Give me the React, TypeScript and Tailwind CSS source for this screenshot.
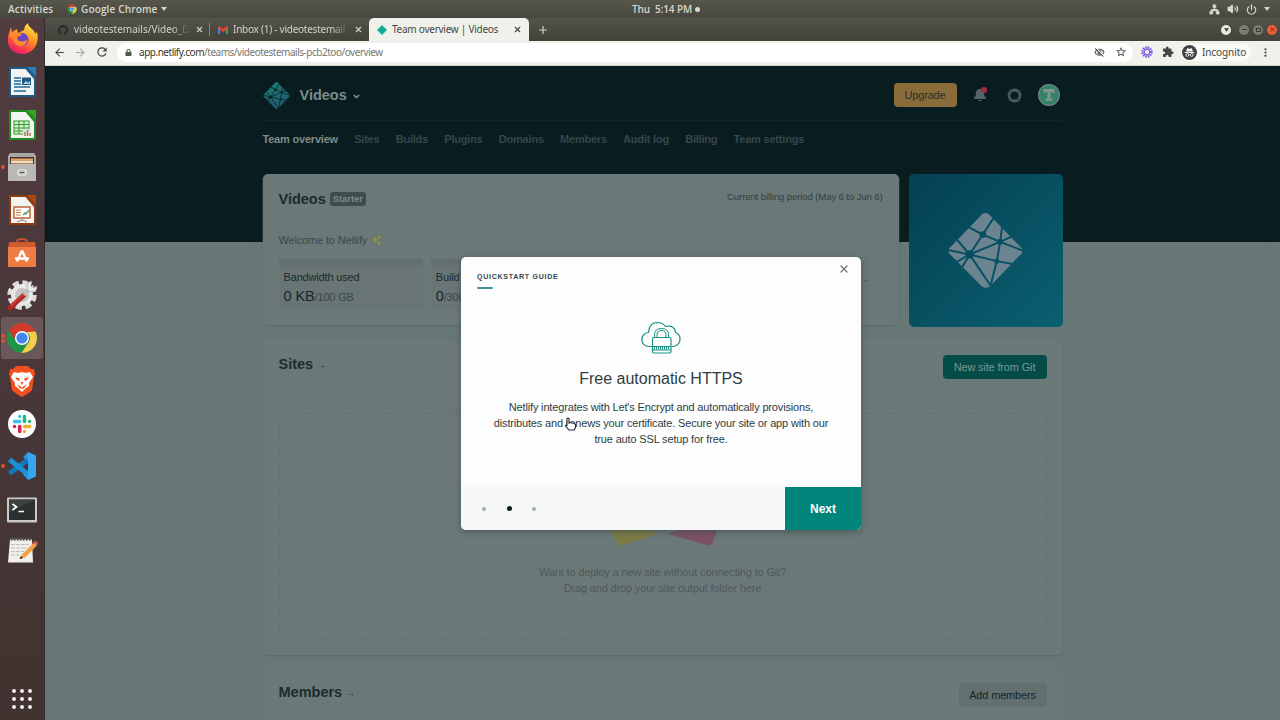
import type { ReactNode } from 'react'
import { FaGithub, FaLock } from 'react-icons/fa'
import { MdArrowBack, MdArrowForward, MdExtension, MdMoreVert, MdOutlineVisibilityOff, MdRefresh, MdStarBorder } from 'react-icons/md'
import { Volume2, Power, Network, X, Plus, ChevronDown } from 'lucide-react'

function ChromeIcon({ size }: { size: number }) {
  return (
    <svg width={size} height={size} viewBox="0 0 32 32">
      <circle cx="16" cy="16" r="15" fill="#1f9348" />
      <path d="M3 8.5A15 15 0 0 1 29 8.5L29.5 10H16a6.5 6.5 0 0 0-5.8 9z" fill="#d23a2c" />
      <path d="M29.5 9.5A15 15 0 0 1 15.5 31l6.2-9.5A7 7 0 0 0 20 10z" fill="#f5cb50" />
      <circle cx="16" cy="16" r="7" fill="#fff" />
      <circle cx="16" cy="16" r="5.6" fill="#4285f0" />
    </svg>
  )
}

function NetlifyMark({ id, size, from, to }: { id: string; size: number; from: string; to: string }) {
  return (
    <svg width={size} height={size} viewBox="0 0 226 226">
      <defs>
        <linearGradient id={`${id}-fill`} x1="0" y1="0" x2="0.3" y2="1">
          <stop offset="0" stopColor={from} />
          <stop offset="1" stopColor={to} />
        </linearGradient>
        <mask id={`${id}-mask`}>
          <rect width="226" height="226" fill="#fff" />
          <g stroke="#000" strokeWidth="6" fill="none">
            <path d="M65 125L-2 111M65 125L20 72M65 125L105 65M65 125L157 87M65 125L147 145M65 125L132 224M65 125L24 149M65 125L40 168" />
            <path d="M105 65L58 40M105 65L142 8M105 65L157 87M157 87L164 35M157 87L198 68M157 87L230 115M157 87L147 145M147 145L202 155M147 145L128 220" />
          </g>
          <circle cx="65" cy="125" r="13" />
          <circle cx="105" cy="65" r="10" />
          <circle cx="157" cy="87" r="9" />
          <circle cx="147" cy="145" r="8" />
        </mask>
      </defs>
      <path
        d="M103 4q10-8 20 0L222 106q7 8 0 16L125 222q-11 7-22 0L4 122q-6-8 0-16z"
        fill={`url(#${id}-fill)`}
        mask={`url(#${id}-mask)`}
      />
    </svg>
  )
}

function DocIcon({ color, fold, children }: { color: string; fold: string; children: ReactNode }) {
  return (
    <svg width="32" height="34" viewBox="0 0 32 34">
      <path d="M3 2h18l9 10v20H3z" fill={color} />
      <path d="M5 4h14.5L28 14v16H5z" fill="#f3f3f2" />
      <path d="M19 2h11v12z" fill={color} />
      <path d="M21 2h9v9z" fill={fold} />
      {children}
    </svg>
  )
}

function FirefoxIcon() {
  return (
    <svg width="32" height="34" viewBox="0 0 32 34">
      <defs>
        <linearGradient id="ff" x1="0.8" y1="0" x2="0.3" y2="1">
          <stop offset="0" stopColor="#fff04a" />
          <stop offset="0.45" stopColor="#ff9425" />
          <stop offset="0.8" stopColor="#fb3b4c" />
          <stop offset="1" stopColor="#e01d78" />
        </linearGradient>
      </defs>
      <path d="M5 5l1 5 5-3 1 4 6-3 1-4 3-3c0 5 7 6 7 11l2-2c3 12-4 22-15 22C5 32-1 22 3 11z" fill="url(#ff)" />
      <circle cx="16" cy="17.500" r="6.500" fill="#6b45c8" />
      <path d="M3 13c5-5 9-2 13-1-1 3-5 2-5 4 1 5 9 4 10 1 0 7-6 8-10 6C7 21 7 15 3 13z" fill="#ff8b28" />
    </svg>
  )
}

function WriterIcon() {
  return (
    <DocIcon color="#1c5a87" fold="#2a7fb5">
      <path d="M8 13h7M8 16h7M8 19h7M8 22h16M8 26h12" stroke="#1c6a9c" strokeWidth="1.500" />
      <rect x="16" y="12.500" width="9" height="7.500" fill="#23577b" />
      <path d="M17 19l3-3 2 2 2-2v3z" fill="#a8d3e8" />
    </DocIcon>
  )
}

function CalcIcon() {
  return (
    <DocIcon color="#238a20" fold="#37a51f">
      <rect x="8" y="13" width="15" height="13" fill="#d9efd5" stroke="#2f9a2a" />
      <path d="M8 16.500h15M8 20h15M8 23h15M13 13v13M18 13v13" stroke="#2f9a2a" />
      <rect x="17" y="21" width="8" height="7" fill="#dfe6e2" />
      <path d="M19 28v-4M21.500 28v-6M24 28v-3" stroke="#b6653c" strokeWidth="1.300" />
    </DocIcon>
  )
}

function FilesIcon() {
  return (
    <svg width="32" height="34" viewBox="0 0 32 34">
      <path d="M4 3h24l2 3v24H2V6z" fill="#a9a7a3" />
      <rect x="4" y="7" width="24" height="8" fill="#4a3428" />
      <rect x="5" y="8.500" width="22" height="2" fill="#e9a66a" />
      <rect x="5" y="10.500" width="22" height="3" fill="#f7dcb6" />
      <rect x="2" y="14" width="28" height="17" rx="1" fill="#b9b8b5" />
      <rect x="12" y="20" width="8" height="5" rx="1" fill="none" stroke="#f0f0ee" strokeWidth="1.200" />
      <path d="M14 22.500h4" stroke="#555" />
    </svg>
  )
}

function ImpressIcon() {
  return (
    <DocIcon color="#8f3b10" fold="#a9480f">
      <rect x="8" y="14" width="16" height="11" fill="#fff" stroke="#b65a28" strokeWidth="1.400" />
      <path d="M10 17h5M10 19.500h5M10 22h5" stroke="#d07b46" />
      <path d="M17 22l2-2 1 1 3-4" stroke="#4f9b5c" fill="none" strokeWidth="1.300" />
      <path d="M16 25v2l-5 2M16 27l5 2" stroke="#888" fill="none" />
    </DocIcon>
  )
}

function SoftwareIcon() {
  return (
    <svg width="32" height="34" viewBox="0 0 32 34">
      <path d="M11 9V6q0-3 5-3t5 3v3" fill="none" stroke="#c5552b" strokeWidth="1.800" />
      <path d="M3 6h26l1 7H2z" fill="#cf5a2d" />
      <path d="M2 11h28v20H2z" fill="#ef7c42" />
      <path d="M11 25.500l4.500-10h1l4.500 10M9 22.500h14" fill="none" stroke="#fff" strokeWidth="2.300" />
    </svg>
  )
}

function SettingsIcon() {
  return (
    <svg width="32" height="34" viewBox="0 0 32 34">
      <circle cx="16" cy="17" r="12.500" fill="none" stroke="#dcdcda" strokeWidth="4.500" strokeDasharray="6.200 3.620" />
      <circle cx="16" cy="17" r="9" fill="#c3c5c4" stroke="#e8e8e7" strokeWidth="4" />
      <path d="M4 30L18 17" stroke="#b52722" strokeWidth="5" strokeLinecap="round" />
      <path d="M5 28L18 15.500" stroke="#e06055" strokeWidth="1" />
      <path d="M18 17l6-7" stroke="#b9bfc0" strokeWidth="4" />
      <path d="M21 9q0-5 5-6l-1 5 2 2 4-2q0 6-5 6t-5-5z" fill="#e9edee" stroke="#8a8f90" strokeWidth="0.600" />
    </svg>
  )
}

function BraveIcon() {
  return (
    <svg width="32" height="34" viewBox="0 0 32 34">
      <path d="M10 2h12l3 3 3 0 1 5-1 3-2 13q-1 2-10 7-9-5-10-7L4 13 3 10l1-5 3 0z" fill="#f4501e" />
      <path d="M8 8l4 1 4-1 4 1 4-1 3 5-4 6 0 3-3 2-4 4-4-4-3-2 0-3-4-6z" fill="#fff" />
      <path d="M9 13l5 1.500-1 2.500-2-1zM23 13l-5 1.500 1 2.500 2-1zM14.500 18h3l-1.500 3zM11 20l5 3.500 5-3.500-3 4.500h-4z" fill="#f4501e" />
    </svg>
  )
}

function SlackIcon() {
  return (
    <svg width="32" height="34" viewBox="0 0 32 34">
      <circle cx="16" cy="17" r="14" fill="#fff" />
      <g strokeWidth="3.600" strokeLinecap="round">
        <path d="M13.700 9.500v0M8.500 14.500h5.200" stroke="#36c5f0" />
        <path d="M18.500 9.500v5M23.600 14.500h0" stroke="#2eb67d" />
        <path d="M18.500 19.500h5.200M18.500 24.500v0" stroke="#ecb22e" />
        <path d="M13.700 19.500v5M8.500 19.500h0" stroke="#e01e5a" />
      </g>
    </svg>
  )
}

function VsCodeIcon() {
  return (
    <svg width="32" height="34" viewBox="0 0 32 34">
      <path d="M23 10L3.500 24.500" stroke="#1177bb" strokeWidth="5" />
      <path d="M3.500 10.500L24 27" stroke="#1c8fd6" strokeWidth="5" />
      <path d="M22 3l8 3.500v21L22 31z" fill="#36a6ee" />
      <path d="M22 3v8l-5-2.500zM22 31v-8l-5 2.500z" fill="#249ae4" />
    </svg>
  )
}

function TerminalIcon() {
  return (
    <svg width="32" height="34" viewBox="0 0 32 34">
      <rect x="1" y="5.500" width="30" height="25" rx="1" fill="#c9c9c7" />
      <rect x="3" y="7.500" width="26" height="20.500" fill="#2c2f2f" />
      <path d="M3 7.500h26L3 20.500z" fill="#3d4040" />
      <path d="M6.500 12l4 3-4 3M12.500 19.500h5.500" fill="none" stroke="#fff" strokeWidth="1.700" />
    </svg>
  )
}

function NotesIcon() {
  return (
    <svg width="32" height="34" viewBox="0 0 32 34">
      <path d="M4 4.500h22l1 23H2z" fill="#f0efea" />
      <path d="M5 4h21" stroke="#55544f" strokeWidth="3.500" strokeDasharray="1.500 1.500" />
      <path d="M5 9.500h18M5 13h16M5 16.500h13M5 20h10" stroke="#bdbdb8" strokeDasharray="4 1" />
      <path d="M16 19.500L28 7.500l3 3-12 12-5 1.500z" fill="#f0a044" />
      <path d="M27.500 7.500l2-2 3 3-2 2z" fill="#d9505b" />
      <path d="M13.500 24l1.500-3 2 2z" fill="#222" />
    </svg>
  )
}

const dockItems = [
  { name: 'firefox', icon: <FirefoxIcon />, dots: 0 },
  { name: 'writer', icon: <WriterIcon />, dots: 0 },
  { name: 'calc', icon: <CalcIcon />, dots: 0 },
  { name: 'files', icon: <FilesIcon />, dots: 1 },
  { name: 'impress', icon: <ImpressIcon />, dots: 0 },
  { name: 'software', icon: <SoftwareIcon />, dots: 0 },
  { name: 'settings', icon: <SettingsIcon />, dots: 0 },
  { name: 'chrome', icon: <ChromeIcon size={32} />, dots: 2, active: true },
  { name: 'brave', icon: <BraveIcon />, dots: 0 },
  { name: 'slack', icon: <SlackIcon />, dots: 0 },
  { name: 'vscode', icon: <VsCodeIcon />, dots: 1 },
  { name: 'terminal', icon: <TerminalIcon />, dots: 0 },
  { name: 'notes', icon: <NotesIcon />, dots: 0 },
]

function Dock() {
  return (
    <aside className="flex w-[45px] shrink-0 flex-col justify-between border-r border-[#372b2c] bg-linear-to-b from-[#523c3f] via-[#49373a] to-[#41332f]">
      <div className="flex flex-col">
        {dockItems.map((item) => (
          <div key={item.name} className="relative flex h-[42.7px] items-center justify-center">
            <div
              className={
                item.active
                  ? 'flex h-[42px] w-[42px] items-center justify-center rounded-[3px] bg-[#6a5759]'
                  : 'flex h-[42px] w-[42px] items-center justify-center'
              }
            >
              {item.icon}
            </div>
            <div className="absolute left-[1px] flex flex-col gap-[1px]">
              {item.dots > 0 && <span className="size-[4px] rounded-full bg-[#d9532c]" />}
              {item.dots > 1 && <span className="size-[4px] rounded-full bg-[#d9532c]" />}
            </div>
          </div>
        ))}
      </div>
      <div className="mb-[11px] grid grid-cols-3 gap-[4px] self-center">
        {Array.from({ length: 9 }, (_, i) => (
          <span key={i} className="size-[4px] rounded-full bg-[#f0eeec]" />
        ))}
      </div>
    </aside>
  )
}

function SystemBar() {
  return (
    <header className="flex h-[18px] shrink-0 items-center justify-between bg-linear-to-b from-[#56564b] to-[#47473f] pr-[10px] pl-2 font-['Open_Sans',sans-serif] text-[10px] font-semibold text-[#d8d6cd]">
      <div className="flex w-[300px] items-center whitespace-nowrap">
        <span className="w-[59px] tracking-[0.15px]">Activities</span>
        <ChromeIcon size={10} />
        <span className="ml-[4px] tracking-[0.15px]">Google Chrome</span>
        <svg className="ml-[3px]" width="6" height="4" viewBox="0 0 6 4"><path d="M0 0h6L3 4z" fill="#d8d6cd" /></svg>
      </div>
      <div className="flex items-center pl-[54px] tracking-[-0.1px] whitespace-pre">
        <span>Thu  5:14 PM</span>
        <span className="ml-[3px] size-[5px] rounded-full bg-[#d8d6cd]" />
      </div>
      <div className="flex w-[300px] items-center justify-end">
        <Network size={11} fill="#d8d6cd" strokeWidth={2} />
        <Volume2 className="ml-[7px]" size={12} fill="#d8d6cd" />
        <Power className="ml-[7px]" size={11} strokeWidth={2.8} />
        <svg className="ml-[7px]" width="6" height="4" viewBox="0 0 6 4"><path d="M0 0h6L3 4z" fill="#d8d6cd" /></svg>
      </div>
    </header>
  )
}

function TabStrip() {
  return (
    <div className="flex h-[23px] shrink-0 items-center bg-linear-to-b from-[#53534a] to-[#42423b] pr-[3px] pl-[13px] font-['Noto_Sans',sans-serif] text-[10px] text-[#d2d1c9]">
      <FaGithub size={10} className="text-[#25292b]" />
      <span className="ml-[6px] w-[116px] mask-r-from-85% whitespace-nowrap">videotestemails/Video_D</span>
      <X className="ml-[5px]" size={9} strokeWidth={3} />
      <span className="ml-[5px] h-[13px] w-px bg-[#85857a]" />
      <svg className="ml-[8px]" width="10" height="8" viewBox="0 0 10 8">
        <path d="M0 1v7h2V4l3 2 3-2v4h2V1L8.500 0 5 3 1.500 0z" fill="#ea4335" />
        <path d="M0 2l2 1.500V8H0z" fill="#4285f4" />
        <path d="M8 3.500L10 2v6H8z" fill="#34a853" />
      </svg>
      <span className="ml-[5px] w-[116px] mask-r-from-85% tracking-[-0.25px] whitespace-nowrap">Inbox (1) - videotestemail</span>
      <X className="ml-[5px]" size={9} strokeWidth={3} />
      <div className="ml-[6px] flex h-full w-[160px] items-center rounded-t-[5px] bg-[#f1f1ec] pl-[8px] text-[#45473f]">
        <svg width="10" height="10" viewBox="0 0 10 10"><path d="M5 0l5 5-5 5-5-5z" fill="#0fae96" /></svg>
        <span className="ml-[5px] w-[116px] tracking-[-0.25px] whitespace-nowrap">Team overview | Videos</span>
        <X className="ml-[5px]" size={9} strokeWidth={3} />
      </div>
      <Plus className="ml-[8px]" size={12} strokeWidth={2.4} />
      <div className="ml-auto flex items-center gap-[4px]">
        <span className="mr-[4px] flex size-[10px] items-center justify-center rounded-full bg-[#e9e8e2]">
          <svg width="5" height="4" viewBox="0 0 6 4"><path d="M0 0h6L3 4z" fill="#3c3c36" /></svg>
        </span>
        <span className="flex size-[10px] items-center justify-center rounded-full bg-[#7c7b72]">
          <span className="h-px w-[5px] bg-[#3d3d37]" />
        </span>
        <span className="flex size-[10px] items-center justify-center rounded-full bg-[#7c7b72]">
          <span className="h-[4px] w-[5px] border border-[#3d3d37]" />
        </span>
        <span className="flex size-[10px] items-center justify-center rounded-full bg-[#ec5f3b]">
          <X size={7} strokeWidth={3} className="text-[#6b2412]" />
        </span>
      </div>
    </div>
  )
}

function Toolbar() {
  return (
    <div className="flex h-[25px] shrink-0 items-center border-b border-[#cfd6d0] bg-[#f1f1ec] px-[8px] pb-[2px] font-['Noto_Sans',sans-serif] text-[10px] text-[#46483f]">
      <MdArrowBack size={13} />
      <MdArrowForward className="ml-[8px] text-[#a7a7a2]" size={13} />
      <MdRefresh className="ml-[8px]" size={14} />
      <div className="ml-[8px] flex h-[19px] w-[1016px] items-center rounded-full bg-white pr-[6px] pl-[8px]">
        <FaLock size={7} className="text-[#55574f]" />
        <span className="ml-[7px] tracking-[-0.48px] whitespace-nowrap text-[#777970]">
          <span className="text-[#33352f]">app.netlify.com</span>/teams/videotestemails-pcb2too/overview
        </span>
        <MdOutlineVisibilityOff className="ml-auto" size={11} />
        <MdStarBorder className="ml-[10px]" size={12} />
      </div>
      <svg className="ml-[8px]" width="12" height="12" viewBox="0 0 12 12">
        <circle cx="6" cy="6" r="4.200" fill="none" stroke="#7a5be0" strokeWidth="3" strokeDasharray="1.400 .799" />
        <circle cx="6" cy="6" r="2.700" fill="none" stroke="#7a5be0" strokeWidth="1" />
      </svg>
      <MdExtension className="ml-[9px]" size={12} />
      <div className="ml-[7px] flex h-[17px] w-[70px] items-center rounded-full bg-[#fafaf8] pl-[1px]">
        <svg width="15" height="15" viewBox="0 0 15 15">
          <circle cx="7.500" cy="7.500" r="7.500" fill="#404244" />
          <path d="M5 3.200l2.500.500 2.500-.500.800 3.200H4.200zM2.800 7h9.400v.900H2.800z" fill="#fff" />
          <circle cx="5.300" cy="10" r="1.400" fill="none" stroke="#fff" strokeWidth=".8" />
          <circle cx="9.700" cy="10" r="1.400" fill="none" stroke="#fff" strokeWidth=".8" />
          <path d="M6.700 9.700h1.600" stroke="#fff" strokeWidth=".7" />
        </svg>
        <span className="ml-[5px] tracking-[-0.1px]">Incognito</span>
      </div>
      <MdMoreVert className="ml-auto" size={13} />
    </div>
  )
}

const navLinks = ['Sites', 'Builds', 'Plugins', 'Domains', 'Members', 'Audit log', 'Billing', 'Team settings']

function TeamHeader() {
  return (
    <div className="flex shrink-0 flex-col">
      <div className="flex h-[55px] items-center border-b border-[#0f2428] pt-[4px]">
        <NetlifyMark id="brand" size={27} from="#1b7a73" to="#205c6e" />
        <span className="ml-[10px] text-[14.500px] font-bold tracking-normal text-[#7f8b8b]">Videos</span>
        <ChevronDown className="mt-[2px] ml-[5px] text-[#7f8b8b]" size={9} strokeWidth={4} />
        <div className="ml-auto flex h-6 w-[63px] items-center justify-center rounded-[4px] bg-[#8a6c3b] text-[#25302b]">Upgrade</div>
        <div className="relative ml-[17px]">
          <svg width="12" height="14" viewBox="0 0 12 14">
            <path d="M6 1q4 0 4 4.500 0 3 2 4.500v1H0v-1q2-1.500 2-4.500Q2 1 6 1zM4 12h4q-2 2.500-4 0z" fill="#566466" />
          </svg>
          <span className="absolute -top-px -right-[1px] size-[6px] rounded-full bg-[#a52a45]" />
        </div>
        <svg className="ml-[21px]" width="15" height="15" viewBox="0 0 15 15">
          <circle cx="7.500" cy="7.500" r="5.500" fill="none" stroke="#4d5b5e" strokeWidth="2.800" />
          <path d="M2 2l3 3M13 2l-3 3M2 13l3-3M13 13l-3-3" stroke="#33464a" strokeWidth="1.200" />
        </svg>
        <svg className="mr-[3px] ml-[16px]" width="22" height="22" viewBox="0 0 22 22">
          <circle cx="11" cy="11" r="11" fill="#6e8883" />
          <circle cx="11" cy="11" r="9.800" fill="#338169" />
          <path d="M5.500 5h11v4h-2V8h-2v6.500h2V17h-7v-2.500h2V8h-2v1h-2z" fill="#81958f" />
        </svg>
      </div>
      <nav className="flex h-[53px] gap-[16.200px] pt-[10px] font-bold tracking-[-0.2px] text-[#35474a]">
        <span className="text-[#7f8b8b]">Team overview</span>
        {navLinks.map((link) => (
          <span key={link}>{link}</span>
        ))}
      </nav>
    </div>
  )
}

function UsageBox({ children }: { children?: ReactNode }) {
  return (
    <div className="h-[49px] flex-1 rounded-[2px] border-t-[6px] border-[#636f6f] bg-[#697575] px-[5px] pt-[4px]">{children}</div>
  )
}

function UsageCard() {
  return (
    <section className="flex h-[151px] w-[636px] flex-col rounded-[5px] bg-[#6b7878] px-4 pt-[14px] shadow-[0_1px_2px_#5b6a69]">
      <div className="flex justify-between">
        <div className="flex h-[22px] items-center tracking-normal">
          <span className="text-[14.500px] font-bold text-[#1a2c2f]">Videos</span>
          <span className="ml-[4px] rounded-[3px] bg-[#3d4d4f] px-[3px] text-[9.330px] leading-[14px] font-bold text-[#7e8a8a]">Starter</span>
        </div>
        <span className="pt-px text-[9.600px] tracking-[-0.13px] text-[#303f41]">Current billing period (May 6 to Jun 6)</span>
      </div>
      <p className="mt-[22px] flex items-center gap-[4px] text-[#39484a]">
        Welcome to Netlify
        <svg width="10" height="10" viewBox="0 0 9 9">
          <path d="M3.500 1.500l.9 2 2 .9-2 .9-.9 2-.9-2-2-.9 2-.9zM7 0l.600 1.300L9 2l-1.400.700L7 4l-.600-1.300L5 2l1.400-.7zM7 5.500l.600 1.100 1.200.600-1.200.600L7 9l-.600-1.200-1.200-.600 1.200-.6z" fill="#929a2c" />
        </svg>
      </p>
      <div className="mt-[11px] flex gap-2">
        <UsageBox>
          <p className="text-[#1a2b2e]">Bandwidth used</p>
          <p className="mt-px leading-5 text-[#36464a]"><span className="text-[14.500px] tracking-[-0.1px] text-[#14272a]">0 KB</span>/100 GB</p>
        </UsageBox>
        <UsageBox>
          <p className="whitespace-nowrap text-[#1a2b2e]">Build</p>
          <p className="mt-px leading-5 text-[#36464a]"><span className="text-[14.500px] tracking-[-0.1px] text-[#14272a]">0</span>/300</p>
        </UsageBox>
        <UsageBox />
        <div className="h-[49px] flex-1 bg-[#6a7777] pt-3 pr-[13px] text-right text-[9px] text-[#4c5b5c]">→</div>
      </div>
    </section>
  )
}

function SitesCard() {
  return (
    <section className="mt-[11px] flex h-[317px] shrink-0 flex-col rounded-[5px] bg-[#6b7878] px-4 shadow-[0_1px_2px_#5b6a69]">
      <div className="flex h-[75px] shrink-0 items-start justify-between pt-[16px]">
        <h2 className="flex items-center text-[14.500px] leading-[18px] font-bold tracking-normal text-[#1a2c2f]">
          Sites <span className="mt-[2px] ml-[3px] text-[10px]">→</span>
        </h2>
        <div className="mt-px flex h-6 w-[104px] items-center justify-center rounded-[4px] bg-[#054b48] text-[#7c9795]">New site from Git</div>
      </div>
      <div className="flex h-[226px] flex-col items-center rounded-[5px] border border-dashed border-[#636f70] pt-[112px] text-center leading-4 text-[#4c5a5b]">
        <svg width="110" height="20" viewBox="0 0 110 20">
          <path d="M0 2l14-2h16l20 8-35 11q-4 1-6-3z" fill="#7b7c46" />
          <path d="M60 8L80 0h30l-5 16q-2 4-6 3z" fill="#7a5264" />
        </svg>
        <p className="mt-[18px]">Want to deploy a new site without connecting to Git?<br />Drag and drop your site output folder here</p>
      </div>
    </section>
  )
}

function MembersCard() {
  return (
    <section className="mt-[12px] flex h-[100px] shrink-0 items-start justify-between rounded-[5px] bg-[#6b7878] px-4 pt-4">
      <h2 className="-mt-px flex items-center text-[14.500px] leading-[18px] font-bold tracking-normal text-[#1a2c2f]">
        Members <span className="mt-[2px] ml-[3px] text-[10px]">→</span>
      </h2>
      <div className="flex h-6 w-[88px] items-center justify-center rounded-[4px] bg-[#637070] text-[#15272a]">Add members</div>
    </section>
  )
}

function CloudLock() {
  return (
    <svg width="40" height="34" viewBox="0 0 40 34" fill="none" stroke="#1a9387">
      <path d="M11 25.500H8a7 7 0 0 1-.5-14Q8 2 16 1.500q6 0 8.500 4 9-2 10 6 4.500 1.500 4.500 6.500 0 6-6.500 7.500H31" strokeWidth="1.200" />
      <path d="M13.500 17v-3.500q0-6 7-6t7 6V17M16 17v-3q0-4.500 4.500-4.500T25 14v3" />
      <rect x="11.500" y="16.500" width="18.500" height="15.500" rx="1.500" strokeWidth="1.200" />
      <path d="M12 25.500h18M12 29h18" />
      <path d="M13 27.200h16" strokeWidth="2.500" strokeDasharray="1 1" />
    </svg>
  )
}

function QuickstartModal() {
  return (
    <div className="absolute top-[257px] left-[461px] flex h-[273px] w-[400px] flex-col overflow-hidden rounded-[5px] bg-[#fdfdfd] font-['Liberation_Sans',sans-serif] text-[11px] tracking-[-0.160px] shadow-[0_2px_6px_#35464699]">
      <div className="flex h-[230px] flex-col px-4 pt-[14px]">
        <div className="flex h-[36px] justify-between">
          <div>
            <p className="text-[7px] leading-[11px] font-bold tracking-[0.750px] text-[#35454a]">QUICKSTART GUIDE</p>
            <div className="mt-[5px] h-[2px] w-4 rounded-full bg-[#3f958f]" />
          </div>
          <X className="-mt-[8px] -mr-[5px] text-[#6c7678]" size={12} strokeWidth={2.5} />
        </div>
        <div className="flex flex-col items-center pt-[14px] text-center text-[#2f3e42]">
          <CloudLock />
          <h3 className="mt-[14px] text-base leading-5 tracking-normal">Free automatic HTTPS</h3>
          <p className="mt-[10px] w-[340px] leading-4">
            Netlify integrates with Let's Encrypt and automatically provisions, distributes and renews your certificate. Secure your site or app with our true auto SSL setup for free.
          </p>
        </div>
      </div>
      <div className="flex h-[43px] items-center bg-[#f6f7f7] pl-[21px]">
        <span className="size-[4px] rounded-full bg-[#a4abac]" />
        <span className="ml-[20.500px] size-[5px] rounded-full bg-[#0e1e25]" />
        <span className="ml-[20.500px] size-[4px] rounded-full bg-[#a4abac]" />
        <div className="ml-auto flex h-full w-[76px] items-center justify-center bg-[#00857b] text-xs font-bold tracking-normal text-white">Next</div>
      </div>
    </div>
  )
}

function HandCursor() {
  return (
    <svg className="absolute top-[417px] left-[564px]" width="13" height="14" viewBox="0 0 13 14">
      <path
        d="M3 1.500q1-1 2 0v4.500l1-.500 1.500.500 1.500 0 1.500.500 1 1v3L10 13H5L1.500 9q0-1 1.500-.500z"
        fill="#fff"
        stroke="#22282a"
        strokeWidth="1.100"
      />
    </svg>
  )
}

export default function App() {
  return (
    <div className="relative flex h-[720px] w-[1280px] flex-col overflow-hidden">
      <SystemBar />
      <div className="flex min-h-0 flex-1">
        <Dock />
        <div className="flex min-w-0 flex-1 flex-col">
          <TabStrip />
          <Toolbar />
          <main className="flex min-h-0 flex-1 justify-center overflow-hidden bg-linear-to-b from-[#091d20] from-[176px] to-[#667776] to-[176px] font-['Liberation_Sans',sans-serif] text-[11px] leading-4 tracking-[-0.160px]">
            <div className="flex w-[800px] flex-col">
              <TeamHeader />
              <div className="flex shrink-0 justify-between">
                <UsageCard />
                <div className="flex h-[153px] w-[154px] items-center justify-center rounded-[5px] bg-linear-to-br from-[#054054] to-[#0a6070]">
                  <NetlifyMark id="promo" size={75} from="#6c8490" to="#6c8490" />
                </div>
              </div>
              <SitesCard />
              <MembersCard />
            </div>
          </main>
        </div>
      </div>
      <QuickstartModal />
      <HandCursor />
    </div>
  )
}
